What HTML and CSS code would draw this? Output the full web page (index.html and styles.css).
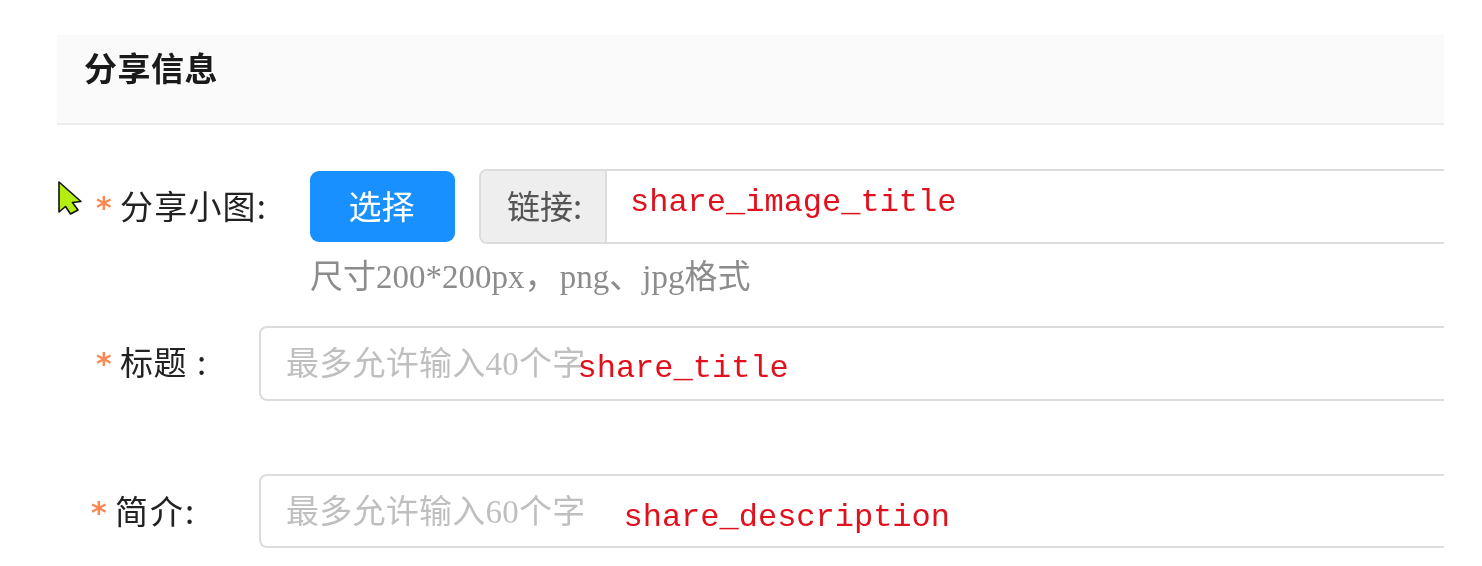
FILE: index.html
```html
<!DOCTYPE html>
<html lang="zh">
  <head>
    <meta charset="utf-8">
    <title>分享信息</title>
    <link rel="stylesheet" href="styles.css">
  </head>
  <body>
    <div id="wrapper">

      <svg class="cursor" width="26" height="36" viewBox="0 0 26 36">
        <path d="M2 1 L2 31 L8.5 25.5 L13.5 33 L21 29 L15.5 21.5 L24 20.5 Z" fill="#b4ee10" stroke="#111" stroke-width="1.6" stroke-linejoin="round"/>
      </svg>

      <div class="head">分享信息</div>

      <div class="row rowImage">
        <div class="label labelImage"><span class="star">*</span>分享小图:</div>
        <button class="bSelect" type="button">选择</button>
        <div class="group">
          <div class="addon">链接:</div>
          <div class="field"><span class="note noteImage">share_image_title</span></div>
        </div>
      </div>
      <div class="hint">尺寸200*200px， png、jpg格式</div>

      <div class="row rowTitle">
        <div class="label labelTitle"><span class="star">*</span>标题 :</div>
        <div class="box">
          <span class="holder holderTitle">最多允许输入40个字</span>
          <span class="note noteTitle">share_title</span>
        </div>
      </div>

      <div class="row rowDesc">
        <div class="label labelDesc"><span class="star">*</span>简介:</div>
        <div class="box">
          <span class="holder holderDesc">最多允许输入60个字</span>
          <span class="note noteDesc">share_description</span>
        </div>
      </div>

    </div>
  </body>
</html>
```

FILE: styles.css
```css
html, body   {  margin: 0;  height: 100%;  background: #fff;  overflow: hidden;  }
#wrapper     {  position: relative;  box-sizing: border-box;  height: 566px;  padding: 35px 38px 0 57px;  font-family: "Liberation Serif", "Noto Sans CJK SC", serif;  font-size: 33px;  color: #222;  filter: blur(0.5px);  }

.cursor      {  position: absolute;  left: 57px;  top: 181px;  }

.head        {  box-sizing: border-box;  height: 90px;  padding: 10px 0 0 27px;  background: #fafafa;  border-bottom: 2px solid #ececec;  font-family: "Noto Sans CJK SC", sans-serif;  font-weight: bold;  line-height: 44px;  letter-spacing: 0.5px;  color: #1a1a1a;  }

.row         {  display: flex;  align-items: center;  }
.rowImage    {  margin-top: 44px;  height: 75px;  }
.rowTitle    {  margin-top: 27px;  height: 75px;  }
.rowDesc     {  margin-top: 73px;  height: 74px;  }

.label       {  display: flex;  align-items: center;  flex: none;  box-sizing: border-box;  font-family: "Noto Sans CJK SC", sans-serif;  line-height: 44px;  }
.labelImage  {  width: 253px;  padding: 0 0 4px 39px;  letter-spacing: 1.2px;  }
.labelTitle  {  width: 202px;  padding: 0 0 6px 39px;  letter-spacing: 0.5px;  word-spacing: 2px;  }
.labelDesc   {  width: 202px;  padding: 0 0 2px 34px;  letter-spacing: 2px;  }
.star        {  width: 24px;  margin-top: 6px;  font-family: "DejaVu Sans", sans-serif;  font-size: 30px;  font-weight: bold;  line-height: 30px;  letter-spacing: 0;  color: #f78a52;  }

.bSelect     {  flex: none;  width: 145px;  height: 71px;  padding: 0 2px 4px 0;  background: #1890ff;  border: 0;  border-radius: 9px;  font-family: "Noto Sans CJK SC", sans-serif;  font-size: 33px;  color: #fff;  }

.group       {  display: flex;  flex: 1;  height: 75px;  margin-left: 24px;  box-sizing: border-box;  border: 2px solid #dcdcdc;  border-right: 0;  border-radius: 8px 0 0 8px;  }
.addon       {  flex: none;  box-sizing: border-box;  width: 126px;  padding-left: 26px;  background: #eee;  border-right: 2px solid #dcdcdc;  border-radius: 6px 0 0 6px;  font-family: "Noto Sans CJK SC", sans-serif;  line-height: 68px;  color: #555;  }
.field       {  flex: 1;  display: flex;  align-items: center;  }

.hint        {  height: 44px;  margin: 11px 0 0 253px;  line-height: 44px;  word-spacing: -6px;  color: #8c8c8c;  }

.box         {  display: flex;  align-items: center;  flex: 1;  height: 100%;  box-sizing: border-box;  padding-left: 25px;  border: 2px solid #dcdcdc;  border-right: 0;  border-radius: 8px 0 0 8px;  }
.holder      {  letter-spacing: 0.25px;  color: #bfbfbf;  }
.holderTitle {  padding-bottom: 6px;  }
.holderDesc  {  padding-bottom: 4px;  }

.note        {  font-family: "Liberation Mono", monospace;  font-size: 32px;  color: #e0101c;  }
.noteImage   {  margin: -8px 0 0 23px;  }
.noteTitle   {  margin: 10px 0 0 -8px;  }
.noteDesc    {  margin: 12px 0 0 38px;  }
```
